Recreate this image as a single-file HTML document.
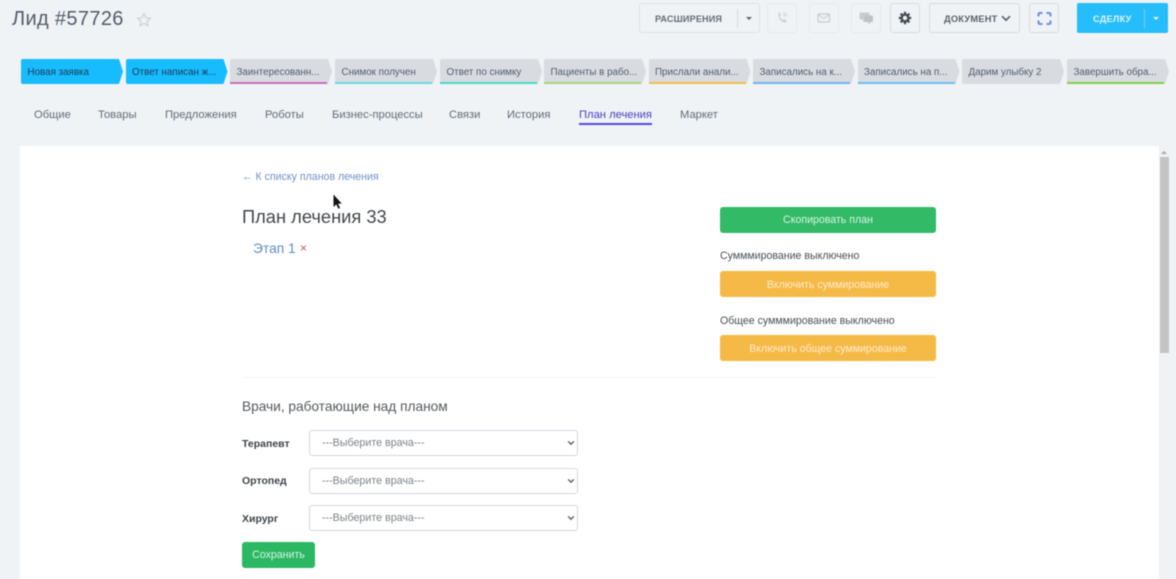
<!DOCTYPE html>
<html lang="ru"><head><meta charset="utf-8"><title>Лид #57726</title>
<style>
html,body{margin:0;padding:0;width:1176px;height:579px;overflow:hidden;background:#eff3f5;font-family:"Liberation Sans","DejaVu Sans",sans-serif}
#w{position:relative;width:1176px;height:579px;overflow:hidden;filter:blur(.5px)}
.a{position:absolute;white-space:nowrap}
.box{position:absolute;box-sizing:border-box;border:1px solid #dfe3e6;border-radius:3px;top:3px;height:30px}
.st{position:absolute;top:59px;width:102px;height:25px;background:#d8dce1;clip-path:polygon(0 0,98px 0,102px 12.5px,98px 25px,0 25px);border-radius:2px 0 0 2px;font-size:9.8px;line-height:27.5px;color:#545c69;box-sizing:border-box;padding-left:6.5px;white-space:nowrap}
.st i{position:absolute;left:0;bottom:0;width:97px;height:2px}
.st.on{background:#17bcff;color:#1c3a55}
.t{position:absolute;top:107px;font-size:11.2px;line-height:16px;color:#616b78;white-space:nowrap}
.btn{position:absolute;left:720px;width:216px;height:26px;border-radius:3px;color:#fff;text-align:center;font-size:10.6px;line-height:27px;opacity:.97}
.lab{position:absolute;left:242px;font-size:10.5px;font-weight:bold;color:#3f4448;line-height:14px}
.sel{position:absolute;left:309px;width:269px;height:26px;box-sizing:border-box;border:1px solid #d5d8dc;border-radius:3px;background:#fff;font-size:10.7px;line-height:25.500px;color:#7d8388;padding-left:12px}
.sel svg{position:absolute;right:2.500px;top:9px}
</style></head><body><div id="w">

<div class="a" style="left:12px;top:7px;font-size:20px;line-height:24px;color:#535c69;letter-spacing:.35px">Лид #57726</div>
<svg class="a" style="left:136px;top:12px" width="16" height="16" viewBox="0 0 16 16"><path d="M8 1.600l1.900 4.200 4.500.5-3.400 3 1 4.500L8 11.500l-4 2.300 1-4.500-3.400-3 4.500-.5z" fill="none" stroke="#c9ced3" stroke-width="1.100"/></svg>

<div class="box" style="left:639px;width:121px;border-width:1.500px"></div>
<div class="a" style="left:655px;top:12.500px;font-size:9.100px;line-height:13px;font-weight:bold;color:#636c78;letter-spacing:.15px">РАСШИРЕНИЯ</div>
<div class="a" style="left:737px;top:9px;width:1px;height:19px;background:#d5d9dc"></div>
<div class="a" style="left:746px;top:17px;width:0;height:0;border:3px solid transparent;border-top:3px solid #5d6570"></div>

<div class="box" style="left:767px;width:30px;border-color:#e6e9eb"></div>
<svg class="a" style="left:774px;top:10px" width="16" height="16" viewBox="0 0 16 16"><path d="M4 2.500l2 0 .8 2.600-1.200 1.100c.6 1.600 1.700 2.900 3.400 3.800l1.200-1 2.400 1.300-.6 2.400c-4.700.4-8.500-4.700-7.600-10.200z" fill="#cfd4d8"/><path d="M9 2.500a4.500 4.500 0 0 1 4 4.200M9 4.700a2.300 2.300 0 0 1 2 2" fill="none" stroke="#cfd4d8"/></svg>

<div class="box" style="left:809px;width:30px;border-color:#e6e9eb"></div>
<svg class="a" style="left:817px;top:13px" width="14" height="10" viewBox="0 0 14 10"><rect x="1" y="1" width="11.500" height="8" rx="1" fill="none" stroke="#c5cace" stroke-width="1.200"/><path d="M1.500 1.800l5.250 3.700 5.250-3.700" fill="none" stroke="#c5cace"/></svg>

<div class="box" style="left:851px;width:30px;border-color:#e6e9eb"></div>
<svg class="a" style="left:859px;top:12px" width="15" height="13" viewBox="0 0 15 13"><rect x="0.500" y="0.500" width="10" height="7" rx="1" fill="#c9cdd1"/><path d="M3 8h2v2z" fill="#c9cdd1"/><rect x="5" y="3.500" width="9" height="6.500" rx="1" fill="#bec3c7"/><path d="M11 10v2.500l-2.500-2.500z" fill="#bec3c7"/></svg>

<div class="box" style="left:890px;width:30px;border-color:#d8dcdf;border-width:1.300px"></div>
<svg class="a" style="left:898px;top:11px" width="14" height="14" viewBox="0 0 14 14"><circle cx="7" cy="7" r="3.400" fill="none" stroke="#454c55" stroke-width="2.400"/><path d="M7 .8v2.400M7 10.800v2.400M.8 7h2.400M10.800 7h2.400M2.600 2.600l1.700 1.700M9.700 9.700l1.700 1.700M2.600 11.400l1.700-1.700M9.700 4.300l1.700-1.700" stroke="#454c55" stroke-width="2.200"/></svg>

<div class="box" style="left:929px;width:91px;border-color:#d8dcdf;border-width:1.300px"></div>
<div class="a" style="left:944px;top:12.500px;font-size:9.300px;line-height:13px;font-weight:bold;color:#59616d;letter-spacing:.2px">ДОКУМЕНТ</div>
<svg class="a" style="left:1001px;top:15px" width="10" height="7" viewBox="0 0 10 7"><path d="M1 1.200l4 4 4-4" fill="none" stroke="#59616d" stroke-width="1.600"/></svg>

<div class="box" style="left:1029px;width:30px;border-color:#d8dcdf"></div>
<svg class="a" style="left:1037px;top:11px" width="15" height="15" viewBox="0 0 15 15"><path d="M1.500 5.500V3.500Q1.500 2 3 2H5.500M9.500 2h2.500Q13.500 2 13.500 3.500V5.500M13.500 9.500v2Q13.500 13 12 13H9.500M5.500 13H3Q1.500 13 1.500 11.500V9.500" fill="none" stroke="#6f8de3" stroke-width="2"/></svg>

<div class="a" style="left:1077px;top:3px;width:91px;height:30px;background:#26bdfb;border-radius:2px"></div>
<div class="a" style="left:1093px;top:12.500px;font-size:9.100px;line-height:13px;font-weight:bold;color:#dff5ff;letter-spacing:.3px">СДЕЛКУ</div>
<div class="a" style="left:1144px;top:9px;width:1px;height:19px;background:#6fd3fb"></div>
<div class="a" style="left:1153px;top:17px;width:0;height:0;border:3px solid transparent;border-top:3px solid #e6f7ff"></div>

<div class="st on" style="left:21px">Новая заявка</div>
<div class="st on" style="left:125.500px">Ответ написан ж...</div>
<div class="st" style="left:230px">Заинтересованн...<i style="background:#c86fc1"></i></div>
<div class="st" style="left:335px">Снимок получен<i style="background:#6fd5e6"></i></div>
<div class="st" style="left:440px">Ответ по снимку<i style="background:#47d8c4"></i></div>
<div class="st" style="left:544px">Пациенты в рабо...<i style="background:#a3d47e"></i></div>
<div class="st" style="left:648.500px">Прислали анали...<i style="background:#f6bd46"></i></div>
<div class="st" style="left:753px">Записались на к...<i style="background:#72b3ee"></i></div>
<div class="st" style="left:857.500px">Записались на п...<i style="background:#6cbdf0"></i></div>
<div class="st" style="left:962px">Дарим улыбку 2</div>
<div class="st" style="left:1067px">Завершить обра...<i style="background:#7ed04b"></i></div>

<div class="t" style="left:34px">Общие</div>
<div class="t" style="left:98px">Товары</div>
<div class="t" style="left:165px">Предложения</div>
<div class="t" style="left:265px">Роботы</div>
<div class="t" style="left:332px">Бизнес-процессы</div>
<div class="t" style="left:449px">Связи</div>
<div class="t" style="left:507px">История</div>
<div class="t" style="left:579px;color:#4a3fc4">План лечения</div>
<div class="a" style="left:579px;top:123px;width:73px;height:1.500px;background:#5b46dd"></div>
<div class="t" style="left:680px">Маркет</div>

<div class="a" style="left:20px;top:146px;width:1139px;height:433px;background:#fff"></div>
<div class="a" style="left:1159px;top:146px;width:11px;height:433px;background:#f1f2f3"></div>
<div class="a" style="left:1160px;top:157px;width:8.500px;height:196px;background:#c4c4c4"></div>
<div class="a" style="left:1161px;top:151px;width:0;height:0;border:3px solid transparent;border-bottom:3.500px solid #a5a8aa;border-top:0"></div>

<div class="a" style="left:242px;top:170.500px;font-size:10.600px;line-height:13px;color:#6d93c4">← К списку планов лечения</div>
<div class="a" style="left:242px;top:206px;font-size:18.300px;line-height:21px;color:#43474b">План лечения 33</div>
<div class="a" style="left:253px;top:240px;font-size:13.800px;line-height:17px;color:#5c8ac9">Этап 1</div>
<div class="a" style="left:300px;top:241px;font-size:12px;line-height:14px;color:#c0565f">×</div>

<div class="btn" style="top:207px;background:#2cb862;color:#d9f3e3">Скопировать план</div>
<div class="a" style="left:720px;top:249px;font-size:10.600px;line-height:14px;color:#4a4f55">Сумммирование выключено</div>
<div class="btn" style="top:271px;background:#f5b741;color:#fdeccb;line-height:28px">Включить суммирование</div>
<div class="a" style="left:720px;top:313.500px;font-size:10.600px;line-height:14px;color:#4a4f55">Общее сумммирование выключено</div>
<div class="btn" style="top:335px;background:#f5b741;color:#fdeccb;line-height:28px">Включить общее суммирование</div>

<div class="a" style="left:242px;top:376.500px;width:694px;height:1px;background:#f4f5f5"></div>

<div class="a" style="left:242px;top:399px;font-size:13.700px;line-height:16px;color:#55595e">Врачи, работающие над планом</div>

<div class="lab" style="top:436.500px">Терапевт</div>
<div class="sel" style="top:430px">---Выберите врача---<svg width="8" height="6" viewBox="0 0 10 7"><path d="M1.500 1.500L5 5l3.500-3.500" fill="none" stroke="#5f6468" stroke-width="1.800"/></svg></div>
<div class="lab" style="top:473.500px">Ортопед</div>
<div class="sel" style="top:467.500px">---Выберите врача---<svg width="8" height="6" viewBox="0 0 10 7"><path d="M1.500 1.500L5 5l3.500-3.500" fill="none" stroke="#5f6468" stroke-width="1.800"/></svg></div>
<div class="lab" style="top:511.500px">Хирург</div>
<div class="sel" style="top:505px">---Выберите врача---<svg width="8" height="6" viewBox="0 0 10 7"><path d="M1.500 1.500L5 5l3.500-3.500" fill="none" stroke="#5f6468" stroke-width="1.800"/></svg></div>

<div class="a" style="left:242px;top:542px;width:73px;height:26px;border-radius:3px;background:#2cb862;color:#d9f3e3;font-size:10.600px;line-height:26px;text-align:center">Сохранить</div>

<svg class="a" style="left:333px;top:194px" width="10" height="16" viewBox="0 0 10 16"><path d="M0.500 0.500v12.500l2.800-2.600 2 4.400 1.800-.8-2-4.300 3.600-.2z" fill="#151515"/></svg>

</div></body></html>
